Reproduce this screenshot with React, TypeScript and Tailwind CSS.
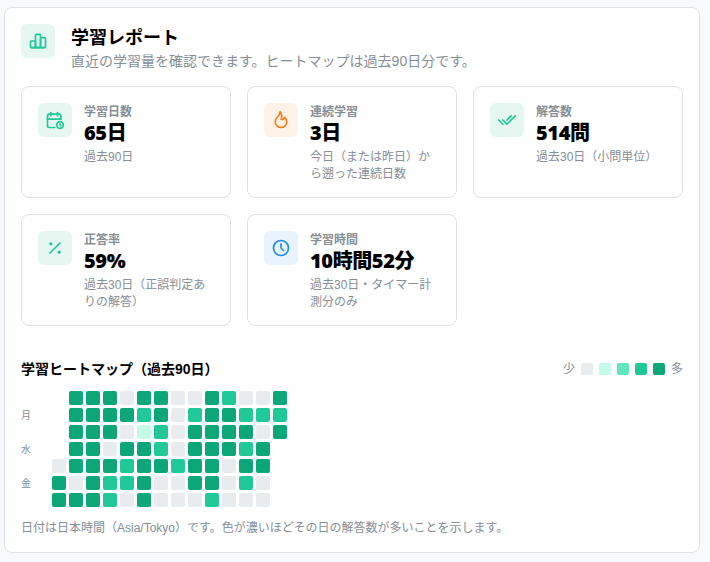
import React from "react";
import { TbCalendarTime, TbChartBar, TbChecks, TbClock, TbFlame, TbPercentage } from "react-icons/tb";

const font = "font-['Liberation_Sans','Noto_Sans_CJK_JP',sans-serif]";

const levelClass: Record<string, string> = {
  e: "bg-[#e9ecef]",
  b: "bg-[#c3fae8]",
  m: "bg-[#63e6be]",
  c: "bg-[#20c997]",
  d: "bg-[#0ca678]",
};

// one string per row, "." = no cell
const heatRows = [
  ".dddeddeedceed",
  ".ddddcdecddccc",
  ".dddebcedddded",
  ".ddeddcedddcd.",
  "edddcddcddedd.",
  "dedccdeeddece.",
  "dddcedeeeceee.",
];

const dayLabels = ["", "月", "", "水", "", "金", ""];

const stats = [
  {
    icon: <TbCalendarTime size={20} />,
    tone: "bg-[#e6f7f1] text-[#20c997]",
    label: "学習日数",
    value: "65日",
    note: "過去90日",
  },
  {
    icon: <TbFlame size={20} />,
    tone: "bg-[#fff3e8] text-[#fd7e14]",
    label: "連続学習",
    value: "3日",
    note: "今日（または昨日）から遡った連続日数",
  },
  {
    icon: <TbChecks size={20} />,
    tone: "bg-[#e6f7f1] text-[#20c997]",
    label: "解答数",
    value: "514問",
    note: "過去30日（小問単位）",
  },
  {
    icon: <TbPercentage size={20} />,
    tone: "bg-[#e6f7f1] text-[#20c997]",
    label: "正答率",
    value: "59%",
    note: "過去30日（正誤判定ありの解答）",
  },
  {
    icon: <TbClock size={20} />,
    tone: "bg-[#e8f3fc] text-[#228be6]",
    label: "学習時間",
    value: "10時間52分",
    note: "過去30日・タイマー計測分のみ",
  },
];

export default function App() {
  return (
    <div className={`${font} min-h-[562px] bg-[#f8f9fa] pt-[7px] pr-[10px] pb-[9px] pl-[4px] text-black`}>
      <div className="rounded-lg border border-[#dee2e6] bg-white px-4 pt-4 pb-[15px]">
        <div className="flex gap-4">
          <div className="flex h-[34px] w-[34px] items-center justify-center rounded-md bg-[#e6f7f1] text-[#20c997]">
            <TbChartBar size={20} />
          </div>
          <div>
            <div className="text-[18px] leading-[28px] font-bold">学習レポート</div>
            <div className="text-[14px] leading-[18px] text-[#868e96]">
              直近の学習量を確認できます。ヒートマップは過去90日分です。
            </div>
          </div>
        </div>

        <div className="mt-4 grid grid-cols-[210px_210px_210px] gap-4">
          {stats.map((s) => (
            <div key={s.label} className="flex gap-3 rounded-lg border border-[#dee2e6] px-4 pt-4 pb-[14px]">
              <div className={`flex h-[34px] w-[34px] shrink-0 items-center justify-center rounded-md ${s.tone}`}>
                {s.icon}
              </div>
              <div className="min-w-0">
                <div className="text-[12px] leading-[18px] font-semibold text-[#868e96]">{s.label}</div>
                <div className="font-['Noto_Sans','Noto_Sans_CJK_JP',sans-serif] text-[20px] leading-[24px] font-black tracking-[-0.4px]">
                  {s.value}
                </div>
                <div className="mt-1 text-[12px] leading-[17px] text-[#868e96]">{s.note}</div>
              </div>
            </div>
          ))}
        </div>

        <div className="mt-[33px] flex items-center justify-between">
          <div className="text-[14px] leading-[20px] font-bold">学習ヒートマップ（過去90日）</div>
          <div className="flex items-center gap-[6px] text-[12px] text-[#868e96]">
            <span>少</span>
            <span className="h-3 w-3 rounded-[2px] bg-[#e9ecef]" />
            <span className="h-3 w-3 rounded-[2px] bg-[#c3fae8]" />
            <span className="h-3 w-3 rounded-[2px] bg-[#63e6be]" />
            <span className="h-3 w-3 rounded-[2px] bg-[#20c997]" />
            <span className="h-3 w-3 rounded-[2px] bg-[#0ca678]" />
            <span>多</span>
          </div>
        </div>

        <div className="mt-3 flex">
          <div className="grid w-[31px] grid-rows-[repeat(7,14px)] gap-[3px]">
            {dayLabels.map((d, i) => (
              <div key={i} className="text-[10px] leading-[16px] text-[#868e96]">
                {d}
              </div>
            ))}
          </div>
          <div className="grid grid-cols-[repeat(14,14px)] grid-rows-[repeat(7,14px)] gap-[3px]">
            {heatRows.flatMap((row, r) =>
              row.split("").map((c, i) =>
                c === "." ? (
                  <div key={`${r}-${i}`} />
                ) : (
                  <div key={`${r}-${i}`} className={`rounded-[2px] ${levelClass[c]}`} />
                )
              )
            )}
          </div>
        </div>

        <div className="mt-[13px] text-[12px] leading-[17px] text-[#868e96]">
          日付は日本時間（Asia/Tokyo）です。色が濃いほどその日の解答数が多いことを示します。
        </div>
      </div>
    </div>
  );
}
